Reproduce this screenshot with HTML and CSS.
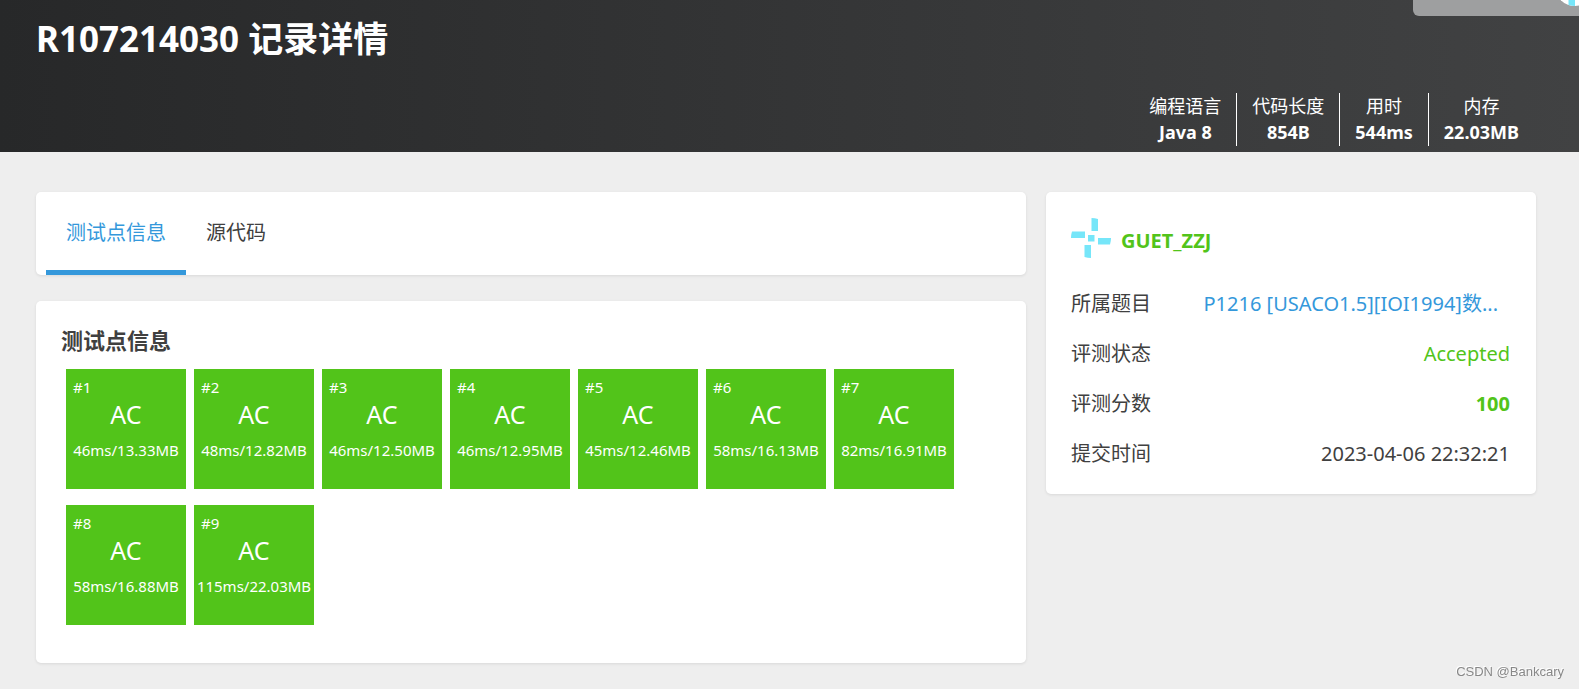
FILE: index.html
```html
<!DOCTYPE html>
<html lang="zh-CN">
<head>
<meta charset="utf-8">
<title>R107214030 记录详情</title>
<link rel="stylesheet" href="styles.css">
</head>
<body>
<svg class="defs" aria-hidden="true">
  <symbol id="avatar" viewBox="0 0 40 40">
    <circle cx="20" cy="20" r="20" fill="#fff"/>
    <g fill="#76e6f9">
      <path d="M20.500 0q3.500 0 6.500 1V13H20.500z"/>
      <path d="M1 13.500H14V20H0q0-3.500 1-6.500z"/>
      <path d="M27 20H40q0 3.500-1 6.500H27z"/>
      <path d="M13.500 27H20V40q-3.500 0-6.500-1z"/>
      <path d="M17 17h6.500v6.500H17z"/>
    </g>
  </symbol>
</svg>
<header class="header">
  <div class="user-nav"><svg class="avatar nav-avatar"><use href="#avatar"/></svg></div>
  <h1 class="title">R107214030 记录详情</h1>
  <dl class="stats">
    <div class="stat"><dt>编程语言</dt><dd>Java 8</dd></div>
    <div class="stat"><dt>代码长度</dt><dd>854B</dd></div>
    <div class="stat"><dt>用时</dt><dd>544ms</dd></div>
    <div class="stat"><dt>内存</dt><dd>22.03MB</dd></div>
  </dl>
</header>
<main class="layout">
  <div class="main-column">
    <nav class="card tabs">
      <button class="tab active" type="button">测试点信息</button>
      <button class="tab" type="button">源代码</button>
    </nav>
    <section class="card results">
      <h2 class="section-title">测试点信息</h2>
      <div class="cases">
        <div class="case"><span class="case-id">#1</span><span class="case-status">AC</span><span class="case-info">46ms/13.33MB</span></div>
        <div class="case"><span class="case-id">#2</span><span class="case-status">AC</span><span class="case-info">48ms/12.82MB</span></div>
        <div class="case"><span class="case-id">#3</span><span class="case-status">AC</span><span class="case-info">46ms/12.50MB</span></div>
        <div class="case"><span class="case-id">#4</span><span class="case-status">AC</span><span class="case-info">46ms/12.95MB</span></div>
        <div class="case"><span class="case-id">#5</span><span class="case-status">AC</span><span class="case-info">45ms/12.46MB</span></div>
        <div class="case"><span class="case-id">#6</span><span class="case-status">AC</span><span class="case-info">58ms/16.13MB</span></div>
        <div class="case"><span class="case-id">#7</span><span class="case-status">AC</span><span class="case-info">82ms/16.91MB</span></div>
        <div class="case"><span class="case-id">#8</span><span class="case-status">AC</span><span class="case-info">58ms/16.88MB</span></div>
        <div class="case"><span class="case-id">#9</span><span class="case-status">AC</span><span class="case-info">115ms/22.03MB</span></div>
      </div>
    </section>
  </div>
  <aside class="card side">
    <div class="author">
      <svg class="avatar"><use href="#avatar"/></svg>
      <a class="author-name" href="#">GUET_ZZJ</a>
    </div>
    <dl class="facts">
      <div class="fact"><dt>所属题目</dt><dd class="problem"><a class="link" href="#">P1216 [USACO1.5][IOI1994]数...</a></dd></div>
      <div class="fact"><dt>评测状态</dt><dd class="ok">Accepted</dd></div>
      <div class="fact"><dt>评测分数</dt><dd class="ok score">100</dd></div>
      <div class="fact"><dt>提交时间</dt><dd>2023-04-06 22:32:21</dd></div>
    </dl>
  </aside>
</main>
<div class="watermark">CSDN @Bankcary</div>
</body>
</html>
```
FILE: styles.css
```css
* { box-sizing: border-box; }

body {
  margin: 0;
  background: #eee;
  color: #404040;
  font: 20px/30px "Noto Sans", "Noto Sans CJK SC", sans-serif;
}

h1, h2, dl, dd { margin: 0; }
a { text-decoration: none; }
.defs { position: absolute; width: 0; height: 0; }
.avatar { display: block; width: 40px; height: 40px; flex: none; }

.header {
  position: relative;
  overflow: hidden;
  display: flex;
  flex-direction: column;
  justify-content: space-between;
  min-height: 152px;
  padding: 15px 45px 6px 36px;
  background: linear-gradient(to right, #272829, #414243);
  color: #fff;
}
.user-nav {
  position: absolute;
  top: 0;
  right: 0;
  width: 166px;
  height: 16px;
  border-bottom-left-radius: 6px;
  background: #9e9fa0;
}
.nav-avatar { position: absolute; top: -34px; right: -16px; }
.title { font-size: 35px; line-height: 48px; }
.stats {
  display: flex;
  justify-content: flex-end;
  font-size: 18px;
  line-height: 26px;
  text-align: center;
}
.stat { padding: 0 15px 1px; }
.stat + .stat { border-left: 1px solid #fff; }
.stat dd { font-weight: 700; }

.layout {
  display: grid;
  grid-template-columns: minmax(0, 99fr) minmax(0, 49fr);
  align-items: start;
  gap: 20px;
  padding: 40px 43px 26px 36px;
}
.main-column { display: grid; gap: 26px; }
.card {
  border-radius: 5px;
  background: #fff;
  box-shadow: 0 1px 3px rgba(26, 26, 26, 0.1);
}

.tabs { display: flex; padding: 0 10px; }
.tab {
  padding: 26px 20px 22px;
  border: 0;
  border-bottom: 5px solid transparent;
  background: none;
  color: inherit;
  font: inherit;
}
.tab.active { border-bottom-color: #3498db; color: #3498db; }

.results { padding: 24px 25px 30px; }
.section-title { font-size: 22px; line-height: 30px; }
.cases {
  display: flex;
  flex-wrap: wrap;
  gap: 16px 8px;
  padding: 14px 5px 8px;
}
.case {
  display: flex;
  flex-direction: column;
  width: 120px;
  height: 120px;
  padding-top: 7px;
  background: #52c41a;
  color: #fff;
  font-size: 15px;
  line-height: 22px;
  text-align: center;
}
.case-id { padding-left: 7px; text-align: left; }
.case-status { font-size: 25px; line-height: 32px; }
.case-info { padding-top: 9px; }

.side { padding: 26px 26px 25px 25px; }
.author { display: flex; align-items: center; gap: 10px; }
.author-name { padding-top: 6px; color: #52c41a; font-weight: 700; }
.facts { display: grid; gap: 20px; padding-top: 31px; }
.fact { display: flex; justify-content: space-between; gap: 20px; }
.problem { padding-right: 12px; }
.link { color: #3498db; }
.ok { color: #52c41a; }
.score { font-weight: 700; }

.watermark {
  position: fixed;
  right: 15px;
  bottom: 8px;
  color: #888;
  font: 13px/18px "Liberation Sans", sans-serif;
  text-shadow: -1px -1px 0 #fff;
}
```
